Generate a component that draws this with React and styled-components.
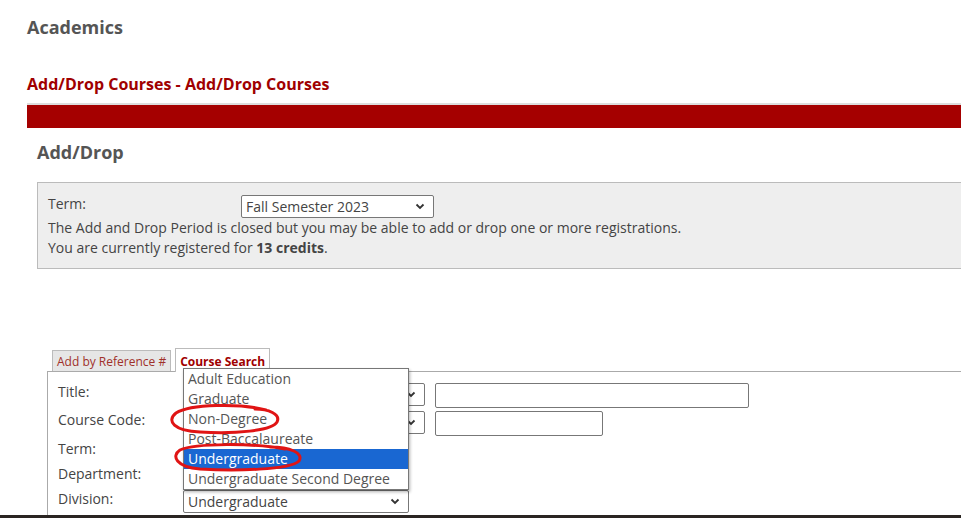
import React from 'react';
import styled, { createGlobalStyle } from 'styled-components';

const GlobalStyle = createGlobalStyle`
  html, body {
    margin: 0;
    padding: 0;
    background: #fff;
  }
  body {
    font-family: 'Open Sans', 'Liberation Sans', sans-serif;
    color: #444;
    font-size: 14px;
  }
`;

const divisions = [
  'Adult Education',
  'Graduate',
  'Non-Degree',
  'Post-Baccalaureate',
  'Undergraduate',
  'Undergraduate Second Degree',
];

const Chevron = () => (
  <svg width="10" height="7" viewBox="0 0 10 7">
    <path d="M1.5 1.5 L5 5 L8.5 1.5" fill="none" stroke="#333" strokeWidth="1.8" />
  </svg>
);

const App = () => (
  <>
    <GlobalStyle />
    <Screen>
      <Page>
        <PageTitle>Academics</PageTitle>
        <SectionTitle>Add/Drop Courses - Add/Drop Courses</SectionTitle>
        <RedBar />
        <Content>
          <BoxTitle>Add/Drop</BoxTitle>
          <InfoBox>
            <TermRow>
              <span>Term:</span>
              <Select width={193}>
                Fall Semester 2023
                <Chevron />
              </Select>
            </TermRow>
            <Line>The Add and Drop Period is closed but you may be able to add or drop one or more registrations.</Line>
            <Line>
              You are currently registered for <strong>13 credits</strong>.
            </Line>
          </InfoBox>

          <Tabs>
            <Tab>Add by Reference #</Tab>
            <Tab active>Course Search</Tab>
          </Tabs>
          <Panel>
            <Form>
              <Label>Title:</Label>
              <Controls>
                <Select width={242}>
                  <Chevron />
                </Select>
                <TextInput width={314} />
              </Controls>

              <Label>Course Code:</Label>
              <Controls>
                <Select width={242}>
                  <Chevron />
                </Select>
                <TextInput width={168} />
              </Controls>

              <Label>Term:</Label>
              <Controls>
                <Select width={226} />
              </Controls>

              <Label>Department:</Label>
              <Controls>
                <Select width={226} />
              </Controls>

              <Label>Division:</Label>
              <Controls>
                <DropdownAnchor>
                  <Dropdown>
                    {divisions.map((d) => (
                      <Option key={d} selected={d === 'Undergraduate'}>
                        {d}
                      </Option>
                    ))}
                  </Dropdown>
                  <Select width={226}>
                    Undergraduate
                    <Chevron />
                  </Select>
                </DropdownAnchor>
              </Controls>
            </Form>
          </Panel>
        </Content>
        <Marks width="961" height="518" viewBox="0 0 961 518">
          <path d="M266 410 C240 403 190 404 176 413 C166 421 174 431 200 432 C235 434 272 431 277 422 C281 414 268 409 255 409" />
          <path d="M285 449 C255 443 195 443 180 450 C171 456 176 467 200 469 C235 471 290 470 299 461 C304 453 290 447 270 447" />
        </Marks>
      </Page>
      <Taskbar />
    </Screen>
  </>
);

export default App;

const Screen = styled.div`
  height: 518px;
  display: flex;
  flex-direction: column;
  overflow: hidden;
`;

const Page = styled.div`
  position: relative;
  flex: 1;
  overflow: hidden;
  padding: 14px 0 0 27px;
`;

const PageTitle = styled.h1`
  margin: 0;
  font-size: 18px;
  line-height: 26px;
  font-weight: 700;
  color: #555;
`;

const SectionTitle = styled.h2`
  margin: 33px 0 0;
  font-size: 16px;
  line-height: 22px;
  font-weight: 700;
  color: #a00000;
`;

const RedBar = styled.div`
  margin-top: 8px;
  height: 23px;
  background: #a50000;
  border-top: 2px solid #ddd;
`;

const Content = styled.div`
  padding-left: 10px;
`;

const BoxTitle = styled.h3`
  margin: 11px 0 0;
  font-size: 18px;
  line-height: 26px;
  font-weight: 700;
  color: #555;
`;

const InfoBox = styled.div`
  margin-top: 17px;
  background: #eee;
  border: 1px solid #bbb;
  border-right: none;
  padding: 11px 10px 10px;
  height: 64px;
`;

const TermRow = styled.div`
  display: grid;
  grid-template-columns: 193px auto;
  align-items: center;
  height: 24px;
  & > span {
    align-self: start;
  }
`;

const Line = styled.div`
  line-height: 20px;
`;

const Select = styled.div`
  box-sizing: border-box;
  width: ${(p) => p.width}px;
  height: 23px;
  display: flex;
  align-items: center;
  justify-content: space-between;
  padding: 0 8px 0 4px;
  background: #fff;
  border: 1px solid #777;
  border-radius: 2px;
  font-size: 14px;
  color: #444;
  svg {
    margin-left: auto;
  }
`;

const TextInput = styled.div`
  box-sizing: border-box;
  width: ${(p) => p.width}px;
  height: 25px;
  border: 1px solid #777;
  border-radius: 2px;
  background: #fff;
`;

const Tabs = styled.div`
  display: flex;
  align-items: flex-end;
  gap: 4px;
  margin: 79px 0 0 15px;
`;

const Tab = styled.div`
  box-sizing: border-box;
  padding: 0 4px;
  height: ${(p) => (p.active ? 24 : 21)}px;
  line-height: ${(p) => (p.active ? 26 : 21)}px;
  font-size: 12px;
  font-weight: ${(p) => (p.active ? 700 : 400)};
  color: ${(p) => (p.active ? '#a00000' : '#a0302a')};
  background: ${(p) => (p.active ? '#fff' : '#e6e6e6')};
  border: 1px solid #bbb;
  border-bottom: none;
  margin-bottom: ${(p) => (p.active ? '-1px' : '0')};
  position: relative;
`;

const Panel = styled.div`
  margin-left: 10px;
  border-top: 1px solid #aaa;
  border-left: 1px solid #aaa;
  padding: 11px 0 0 10px;
  height: 200px;
`;

const Form = styled.div`
  display: grid;
  grid-template-columns: 125px auto;
  grid-template-rows: 28px 29px 25px 25px 25px;
  align-items: start;
`;

const Label = styled.div`
  margin-top: -1px;
  font-size: 14px;
  line-height: 20px;
  color: #444;
`;

const Controls = styled.div`
  display: flex;
  align-items: flex-start;
  gap: 10px;
`;

const DropdownAnchor = styled.div`
  position: relative;
`;

const Dropdown = styled.div`
  position: absolute;
  left: 0;
  bottom: 100%;
  box-sizing: border-box;
  width: 226px;
  background: #fff;
  border: 1px solid #777;
  box-shadow: 1px 2px 3px rgba(0, 0, 0, 0.3);
  z-index: 5;
`;

const Option = styled.div`
  height: 20px;
  line-height: 20px;
  padding-left: 4px;
  font-size: 14px;
  color: ${(p) => (p.selected ? '#fff' : '#555')};
  background: ${(p) => (p.selected ? '#1967d2' : 'transparent')};
`;

const Marks = styled.svg`
  position: absolute;
  top: 0;
  left: 0;
  pointer-events: none;
  z-index: 10;
  path {
    fill: none;
    stroke: #e01414;
    stroke-width: 3;
    stroke-linecap: round;
  }
`;

const Taskbar = styled.div`
  height: 3px;
  background: #2a2522;
`;
